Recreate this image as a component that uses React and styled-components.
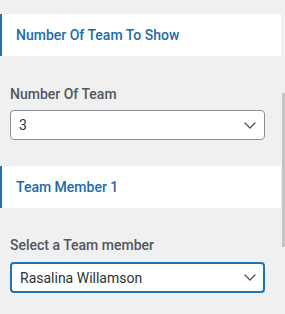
import React from "react";
import styled, { createGlobalStyle } from "styled-components";

const Global = createGlobalStyle`
  html, body { margin: 0; padding: 0; background: #f0f0f1; }
  body { font-family: Roboto, "Noto Sans", sans-serif; -webkit-font-smoothing: antialiased; }
`;

const Frame = styled.div`
  display: flex;
  width: 285px;
  height: 314px;
  overflow: hidden;
  background: #f0f0f1;
`;

const Main = styled.div`
  width: 282px;
  display: flex;
  flex-direction: column;
  padding-top: 14px;
`;

const Track = styled.div`
  width: 3px;
  display: flex;
  flex-direction: column;
`;

const Thumb = styled.div`
  margin-top: 93px;
  height: 154px;
  background: #c3c4c7;
`;

const SectionHeader = styled.div`
  width: 265px;
  height: 42px;
  margin-right: 1px;
  background: #fff;
  border-left: 2px solid #2271b1;
  padding-left: 14px;
  display: flex;
  align-items: center;
  font-size: 14px;
  font-weight: 500;
  color: #216ca8;
  margin-bottom: ${(p) => p.$mb}px;
`;

const Field = styled.div`
  display: flex;
  flex-direction: column;
  padding: 0 17px 0 10px;
  margin-bottom: ${(p) => p.$mb}px;
`;

const Label = styled.label`
  font-size: 14px;
  line-height: 20px;
  font-weight: 500;
  color: #50575e;
  margin-bottom: ${(p) => p.$mb}px;
`;

const SelectBox = styled.div`
  box-sizing: border-box;
  height: ${(p) => (p.$focus ? 31 : 30)}px;
  background: #fff;
  border: ${(p) => (p.$focus ? "2px solid #2271b1" : "1px solid #8c8f94")};
  border-radius: 4px;
  display: flex;
  align-items: center;
  justify-content: space-between;
  padding: ${(p) => (p.$focus ? "0 7px 0 8px" : "0 8px 0 8px")};
  font-size: 14px;
  color: #2c3338;
`;

const Chevron = () => (
  <svg width="12" height="7" viewBox="0 0 12 7" fill="none">
    <path d="M1 1l5 5 5-5" stroke="#50575e" strokeWidth="1.4" strokeLinecap="round" strokeLinejoin="round" />
  </svg>
);

export default function App() {
  return (
    <>
      <Global />
      <Frame>
        <Main>
          <SectionHeader $mb={28}>Number Of Team To Show</SectionHeader>
          <Field $mb={26}>
            <Label $mb={6}>Number Of Team</Label>
            <SelectBox>
              <span>3</span>
              <Chevron />
            </SelectBox>
          </Field>
          <SectionHeader $mb={27}>Team Member 1</SectionHeader>
          <Field $mb={0}>
            <Label $mb={7}>Select a Team member</Label>
            <SelectBox $focus>
              <span>Rasalina Willamson</span>
              <Chevron />
            </SelectBox>
          </Field>
        </Main>
        <Track>
          <Thumb />
        </Track>
      </Frame>
    </>
  );
}
